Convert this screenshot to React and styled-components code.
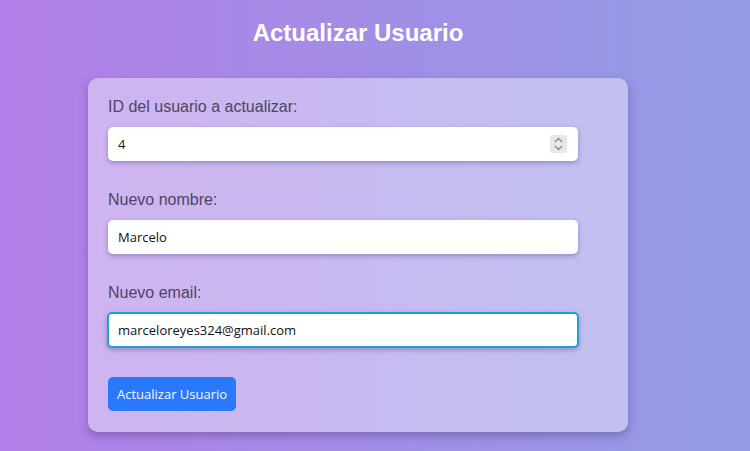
import React, { useState } from "react";
import styled, { createGlobalStyle } from "styled-components";

const GlobalStyle = createGlobalStyle`
  html, body {
    margin: 0;
    padding: 0;
  }
  body {
    min-height: 451px;
    background: linear-gradient(to right, #b27fe7, #939ce6);
    font-family: "Liberation Sans", Arial, sans-serif;
  }
`;

const Page = styled.div`
  width: 716px;
  padding-top: 19px;
  display: flex;
  flex-direction: column;
  align-items: center;
`;

const Title = styled.h1`
  margin: 0 0 31px;
  font-size: 24px;
  line-height: 28px;
  font-weight: 700;
  color: #ffffff;
`;

const Card = styled.form`
  width: 540px;
  box-sizing: border-box;
  padding: 19px 50px 21px 20px;
  background: rgba(255, 255, 255, 0.4);
  border-radius: 10px;
  box-shadow: 0 4px 10px rgba(60, 40, 110, 0.35);
  display: flex;
  flex-direction: column;
`;

const Field = styled.div`
  display: flex;
  flex-direction: column;
  gap: 10px;
  margin-bottom: ${(p) => (p.$last ? "0" : "29px")};
`;

const Label = styled.label`
  font-size: 16px;
  line-height: 20px;
  color: #4f4463;
`;

const InputWrap = styled.div`
  position: relative;
  height: 34px;
`;

const Input = styled.input`
  box-sizing: border-box;
  width: ${(p) => (p.$focused ? "calc(100% + 2px)" : "100%")};
  height: ${(p) => (p.$focused ? "36px" : "34px")};
  margin: ${(p) => (p.$focused ? "-1px -1px" : "0")};
  padding: 0 ${(p) => (p.$focused ? "9px" : "10px")};
  border: ${(p) => (p.$focused ? "2px solid #1e9fd6" : "none")};
  border-radius: 5px;
  background: #fff;
  box-shadow: 0 2px 5px rgba(60, 40, 110, 0.35);
  font-family: "Open Sans", "Noto Sans", sans-serif;
  font-size: 13px;
  color: #111;
  outline: none;
  caret-color: #000;
`;

/* flechas del campo numérico */
const Spinner = styled.span`
  position: absolute;
  right: 11px;
  top: 8px;
  width: 17px;
  height: 18px;
  background: #e8e6ec;
  border-radius: 2px;
  display: flex;
  align-items: center;
  justify-content: center;
`;

const Button = styled.button`
  align-self: flex-start;
  margin-top: 30px;
  height: 34px;
  padding: 0 9px;
  border: none;
  border-radius: 5px;
  background: #2979ff;
  color: #f4f8ff;
  font-family: "Open Sans", "Noto Sans", sans-serif;
  font-size: 13px;
  cursor: pointer;
`;

const fields = [
  { id: "id", label: "ID del usuario a actualizar:", type: "number", value: "4" },
  { id: "name", label: "Nuevo nombre:", type: "text", value: "Marcelo" },
  { id: "email", label: "Nuevo email:", type: "email", value: "marceloreyes324@gmail.com", focused: true },
];

export default function App() {
  const [values, setValues] = useState(
    Object.fromEntries(fields.map((f) => [f.id, f.value]))
  );

  return (
    <>
      <GlobalStyle />
      <Page>
        <Title>Actualizar Usuario</Title>
        <Card onSubmit={(e) => e.preventDefault()}>
          {fields.map((f, i) => (
            <Field key={f.id} $last={i === fields.length - 1}>
              <Label htmlFor={f.id}>{f.label}</Label>
              <InputWrap>
                <Input
                  id={f.id}
                  type={f.type === "number" ? "text" : f.type}
                  value={values[f.id]}
                  $focused={f.focused}
                  autoFocus={f.focused}
                  onChange={(e) => setValues({ ...values, [f.id]: e.target.value })}
                />
                {f.type === "number" && (
                  <Spinner>
                    <svg width="9" height="14" viewBox="0 0 9 14" fill="none" stroke="#8a8794" strokeWidth="1.3">
                      <path d="M1 5 L4.5 1.5 L8 5" />
                      <path d="M1 9 L4.5 12.5 L8 9" />
                    </svg>
                  </Spinner>
                )}
              </InputWrap>
            </Field>
          ))}
          <Button type="submit">Actualizar Usuario</Button>
        </Card>
      </Page>
    </>
  );
}
